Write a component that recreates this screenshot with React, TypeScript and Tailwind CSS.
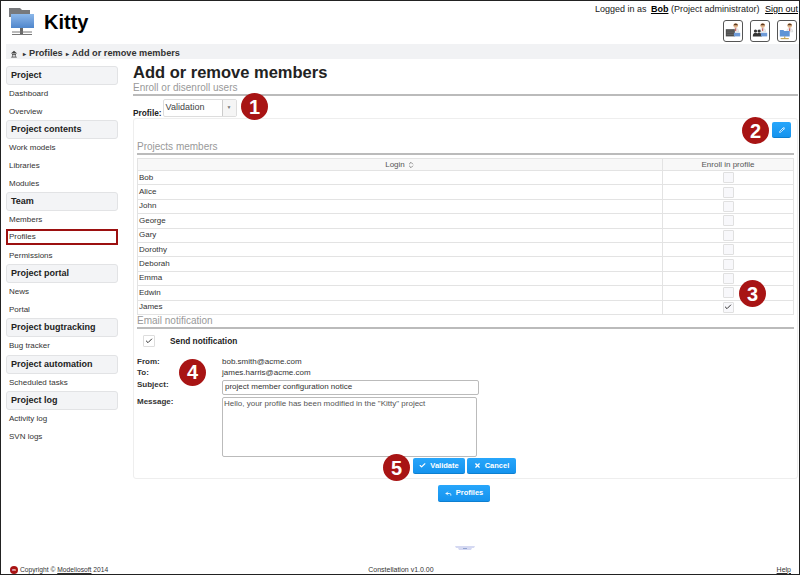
import { Check, ChevronsUpDown, Pencil, Reply, X } from "lucide-react";

const sections = [
  { title: "Project", items: ["Dashboard", "Overview"] },
  { title: "Project contents", items: ["Work models", "Libraries", "Modules"] },
  { title: "Team", items: ["Members", "Profiles", "Permissions"] },
  { title: "Project portal", items: ["News", "Portal"] },
  { title: "Project bugtracking", items: ["Bug tracker"] },
  { title: "Project automation", items: ["Scheduled tasks"] },
  { title: "Project log", items: ["Activity log", "SVN logs"] },
];

const members = ["Bob", "Alice", "John", "George", "Gary", "Dorothy", "Deborah", "Emma", "Edwin", "James"];

function Badge({ n, className }: { n: number; className: string }) {
  return (
    <span className={`absolute z-10 flex h-[27px] w-[27px] items-center justify-center rounded-full bg-[#a81414] text-[20px] font-bold leading-none text-white ${className}`}>
      {n}
    </span>
  );
}

// little "person + thing" buttons in the top right corner
function HeadIcon({ kind }: { kind: "server" | "team" | "network" }) {
  return (
    <div className="h-[22px] w-[20px] rounded-[3px] border border-[#555] bg-white">
      <svg viewBox="0 0 20 22" className="h-full w-full">
        <circle cx="13" cy="5" r="2.600" fill="#e2b48a" />
        <path d="M10.500 4.500a2.600 2.600 0 0 1 5 0z" fill="#5a3a20" />
        <path d="M9.500 12q0-4 3.500-4t3.500 4z" fill="#eee" stroke="#ccc" strokeWidth="0.500" />
        <path d="M13 8v3" stroke="#c03030" strokeWidth="1" />
        {kind === "server" && (
          <>
            <rect x="2" y="9" width="10" height="8" fill="#4a4a4a" />
            <path d="M3 11h8M3 13h8M3 15h8" stroke="#888" strokeWidth="0.500" />
            <rect x="11" y="13" width="7" height="4" fill="#6f9bd8" />
          </>
        )}
        {kind === "team" && (
          <>
            <circle cx="5" cy="11" r="1.800" fill="#333" />
            <circle cx="9" cy="11" r="1.800" fill="#333" />
            <path d="M2 17q0-4 3-4t3 4zM6 17q0-4 3-4t3 4z" fill="#333" />
            <rect x="11" y="13" width="7" height="4" fill="#6f9bd8" />
          </>
        )}
        {kind === "network" && (
          <>
            <path d="M2 10h4l1 1h6v6H2z" fill="#5f95d6" />
            <path d="M7.500 17v2M3 19.500h9" stroke="#b9902a" strokeWidth="1" />
          </>
        )}
      </svg>
    </div>
  );
}

function BlueButton({ children, className }: { children: React.ReactNode; className: string }) {
  return (
    <button className={`flex items-center justify-center gap-[4px] rounded-[2px] border-b border-[#0d7fd0] bg-gradient-to-b from-[#27a6fb] to-[#1493ee] text-[7.500px] font-bold text-white ${className}`}>
      {children}
    </button>
  );
}

export default function App() {
  return (
    <div className="flex h-[575px] w-[800px] flex-col overflow-hidden border border-[#222] bg-white font-['Liberation_Sans',sans-serif] text-[#333]">
      {/* header */}
      <div className="flex h-[43px] shrink-0">
        <div className="flex items-center pb-[2px] pl-[7px]">
          <svg viewBox="0 0 26 29" className="h-[29px] w-[26px]">
            <defs>
              <linearGradient id="fold" x1="0" y1="0" x2="0" y2="1">
                <stop offset="0" stopColor="#8db8ea" />
                <stop offset="1" stopColor="#4f86cc" />
              </linearGradient>
            </defs>
            <path d="M1 1h11l2 2h8v7H1z" fill="#77797c" />
            <rect x="3" y="7" width="23" height="14" fill="url(#fold)" />
            <rect x="12" y="21" width="3" height="6" fill="#666" />
            <path d="M4 25h20M4 27.500h20" stroke="#777" strokeWidth="1" />
          </svg>
          <span className="ml-[10px] text-[20px] font-bold leading-none text-black">Kitty</span>
        </div>
        <div className="ml-auto flex flex-col items-end pr-[1px] pt-[3px]">
          <div className="text-[9px] leading-[11px] text-[#222]">
            Logged in as <span className="ml-[2px] font-bold text-black underline">Bob</span> (Project administrator) <span className="ml-[3px] text-black underline">Sign out</span>
          </div>
          <div className="mt-[5px] flex gap-[7px] pr-[1px]">
            <HeadIcon kind="server" />
            <HeadIcon kind="team" />
            <HeadIcon kind="network" />
          </div>
        </div>
      </div>

      {/* breadcrumb */}
      <div className="ml-[5px] flex h-[15px] shrink-0 items-center gap-[3px] bg-[#f1f2f4] pl-[4px] pt-[5px] text-[9.200px] font-bold text-[#333]">
        <svg viewBox="0 0 10 10" className="h-[8px] w-[8px]">
          <path d="M5 1 1 4.500h8zM2.500 5h5v1h-5zM1.500 8.500h7V9.500h-7zM3 6h1v3H3zM6 6h1v3H6z" fill="#444" />
        </svg>
        <span className="ml-[2px] text-[6px]">▸</span>
        <span>Profiles</span>
        <span className="text-[6px]">▸</span>
        <span>Add or remove members</span>
      </div>

      <div className="flex min-h-0 flex-1">
        {/* sidebar */}
        <div className="ml-[5px] w-[112px] shrink-0 pt-[7px]">
          {sections.map((s) => (
            <div key={s.title} className={s.title === "Project bugtracking" ? "" : "-mb-[1px]"}>
              <div className="flex h-[19px] items-center rounded-[3px] border border-[#e2e3e5] bg-[#f3f4f6] pl-[4px] text-[9px] font-bold text-[#222]">
                {s.title}
              </div>
              {s.items.map((item) => (
                <div
                  key={item}
                  className={
                    item === "Profiles"
                      ? "mb-[2px] flex h-[16px] items-center border-2 border-[#9c1010] pl-[1px] text-[8px] text-[#333]"
                      : "flex h-[18px] items-center pl-[3px] text-[8px] text-[#333]"
                  }
                >
                  {item}
                </div>
              ))}
            </div>
          ))}
        </div>

        {/* main */}
        <div className="ml-[15px] min-w-0 flex-1 pr-[1px] pt-[4px]">
          <h1 className="text-[16.500px] font-bold leading-[19px] text-[#222]">Add or remove members</h1>
          <div className="border-b-2 border-[#bbb] text-[10px] leading-[12px] text-[#999]">Enroll or disenroll users</div>

          <div className="relative mt-[3px] flex h-[19px] items-end">
            <span className="text-[8.300px] font-bold leading-[10px] text-[#222]">Profile:</span>
            <div className="mb-[1px] ml-[1px] flex h-[18px] w-[74px] rounded-[2px] border border-[#ddd]">
              <span className="flex-1 pl-[2px] text-[9px] leading-[15px] text-[#444]">Validation</span>
              <span className="flex w-[14px] items-center justify-center border-l border-[#ccc] bg-[#f5f5f5] text-[5px] text-[#777]">▼</span>
            </div>
            <Badge n={1} className="left-[108px] top-[-6px]" />
          </div>

          <div className="relative h-[361px] rounded-[3px] border border-[#eee] px-[3px]">
            <div className="flex h-[18px] justify-end pr-[3px] pt-[3px]">
              <BlueButton className="h-[16px] w-[19px]">
                <Pencil size={6} strokeWidth={3} />
              </BlueButton>
            </div>
            <Badge n={2} className="left-[608px] top-[-2px]" />

            <div className="mt-[3px] border-b-2 border-[#bbb] text-[10px] leading-[13px] text-[#999]">Projects members</div>
            <div className="mt-[3px] border-l border-r border-[#e3e3e3]">
              <div className="flex h-[13px] border-y border-[#e3e3e3] bg-[#f8f8f8] text-[8px] text-[#555]">
                <div className="flex w-[525px] items-center justify-center gap-[2px] border-r border-[#e3e3e3]">
                  Login <ChevronsUpDown size={8} />
                </div>
                <div className="flex-1 text-center leading-[11px]">Enroll in profile</div>
              </div>
              {members.map((m) => (
                <div key={m} className="flex h-[14.400px] border-b border-[#e3e3e3] text-[8px] text-[#333]">
                  <div className="flex w-[525px] items-center border-r border-[#e3e3e3] pl-[1px]">{m}</div>
                  <div className="flex flex-1 items-center justify-center">
                    <span className="flex h-[11px] w-[11px] items-center justify-center rounded-[1px] border border-[#e0e0e0] bg-[#f8f8fb] text-[#333]">
                      {m === "James" && <Check size={8} strokeWidth={3} />}
                    </span>
                  </div>
                </div>
              ))}
            </div>
            <Badge n={3} className="left-[605px] top-[161px]" />

            <div className="border-b-2 border-[#bbb] text-[10px] leading-[12px] text-[#999]">Email notification</div>

            <div className="mt-[6px] flex h-[12px] items-center pl-[6px]">
              <span className="flex h-[12px] w-[12px] items-center justify-center rounded-[1px] border border-[#ddd] text-[#333]">
                <Check size={8} strokeWidth={3} />
              </span>
              <span className="ml-[15px] text-[8.300px] font-bold text-[#222]">Send notification</span>
            </div>

            <div className="relative mt-[9px] grid grid-cols-[85px_1fr] text-[8px] text-[#333]">
              <span className="h-[11px] font-bold leading-[11px]">From:</span>
              <span className="h-[11px] leading-[11px]">bob.smith@acme.com</span>
              <span className="h-[13px] font-bold leading-[12px]">To:</span>
              <span className="h-[13px] leading-[12px]">james.harris@acme.com</span>
              <span className="font-bold leading-[10px]">Subject:</span>
              <div className="mb-[2px] flex h-[15px] w-[257px] items-center rounded-[2px] border border-[#bbb] pl-[2px] text-[8px] text-[#333]">
                project member configuration notice
              </div>
              <span className="font-bold leading-[10px]">Message:</span>
              <div className="h-[60px] w-[255px] rounded-[2px] border border-[#bbb] pl-[1px] pt-[1px] text-[8px] leading-[10px] text-[#555]">
                Hello, your profile has been modified in the "Kitty" project
              </div>
              <Badge n={4} className="left-[42px] top-[3px]" />
            </div>

            <div className="mt-[1px] flex justify-center gap-[2px] pr-[2px]">
              <BlueButton className="h-[16px] w-[52px]">
                <Check size={7} strokeWidth={4} /> Validate
              </BlueButton>
              <BlueButton className="h-[16px] w-[49px]">
                <X size={7} strokeWidth={4} /> Cancel
              </BlueButton>
            </div>
            <Badge n={5} className="left-[249px] top-[335px]" />
          </div>

          <div className="mt-[6px] flex justify-center pr-[3px]">
            <BlueButton className="h-[17px] w-[52px]">
              <Reply size={7} strokeWidth={3} /> Profiles
            </BlueButton>
          </div>

          <div className="mt-[44px] flex justify-center pr-[2px]">
            <svg viewBox="0 0 20 5" className="h-[5px] w-[20px]">
              <path d="M0 0h20l-1 2h-2l-1 2H4L3 2H1z" fill="#d5d9f2" />
              <rect x="8" y="2" width="4" height="1" fill="#93a4d0" />
            </svg>
          </div>
        </div>
      </div>

      {/* footer */}
      <div className="flex h-[9px] shrink-0 items-center pl-[9px] pt-[1px] text-[6.700px] text-[#333]">
        <span className="flex h-[8px] w-[8px] items-center justify-center rounded-full bg-[#a81414] text-[4px] font-bold text-white">m</span>
        <span className="ml-[2px]">Copyright © <span className="underline">Modeliosoft</span> 2014</span>
        <span className="ml-[260px] text-[7px]">Constellation v1.0.00</span>
        <span className="ml-auto pr-[8px] text-[7px] underline">Help</span>
      </div>
    </div>
  );
}
